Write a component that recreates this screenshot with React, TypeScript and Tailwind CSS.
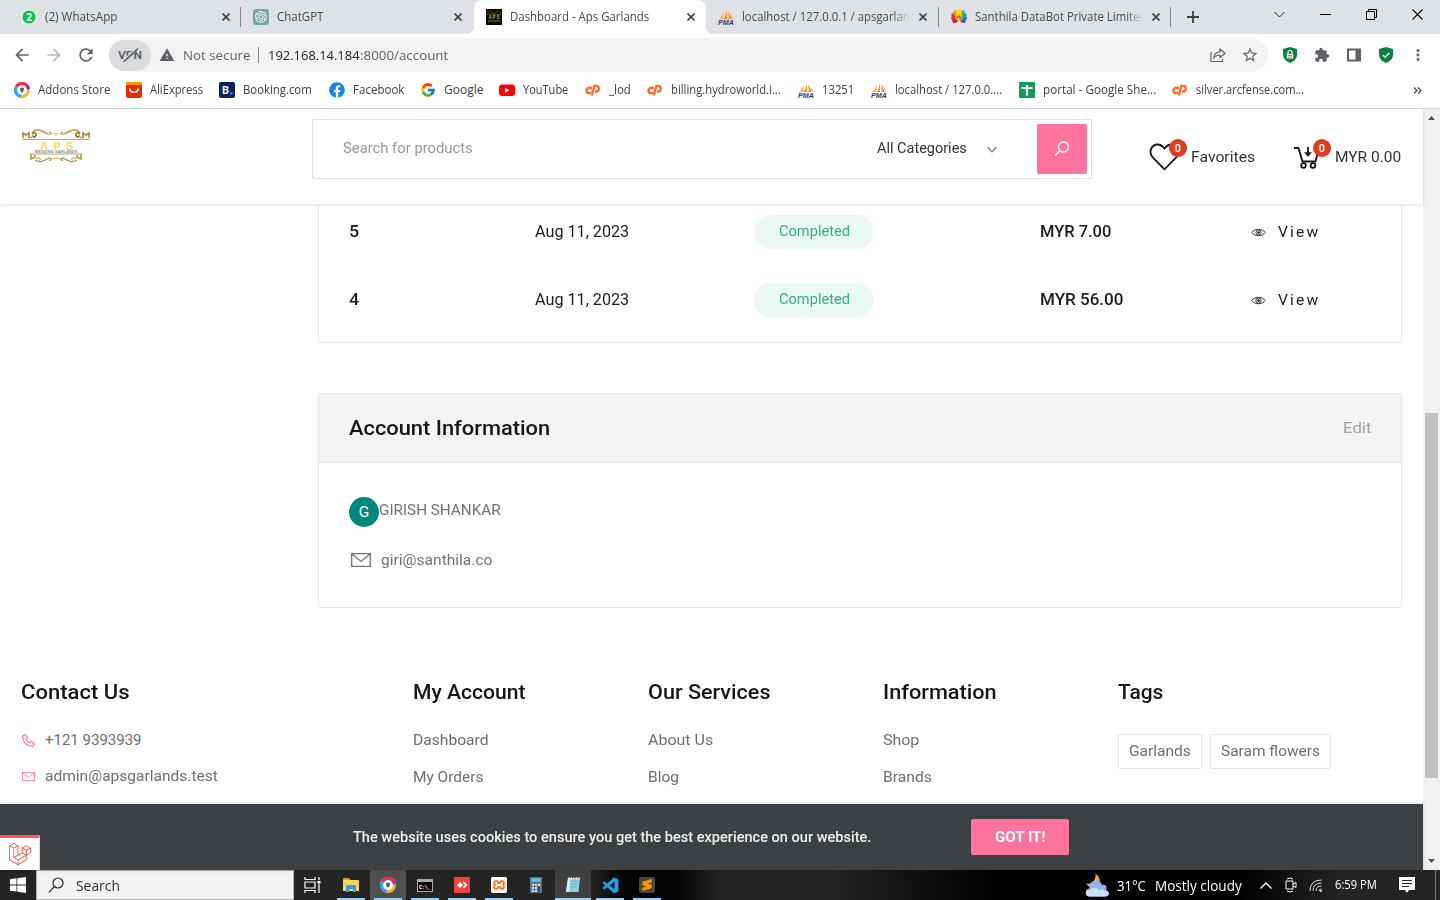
import { useLayoutEffect, useRef, useState } from "react";
import type { ReactNode } from "react";
import { MdArrowBack, MdArrowForward, MdRefresh, MdWarning, MdStarBorder, MdExtension, MdMoreVert } from "react-icons/md";
import { FcGoogle } from "react-icons/fc";
import { FaFacebook, FaLaravel } from "react-icons/fa";
import { SiOpenai, SiXampp, SiSublimetext } from "react-icons/si";
import { BiLogoVisualStudio } from "react-icons/bi";

/** Single line of text whose glyphs are stretched or condensed to fill `w` pixels. */
function Text({ children, w, className = "" }: { children: string; w: number; className?: string }) {
  const ref = useRef<HTMLSpanElement>(null);
  const [scale, setScale] = useState(1);
  useLayoutEffect(() => {
    if (ref.current) {
      setScale(w / ref.current.offsetWidth);
    }
  }, []);
  return (
    <span className={"block shrink-0 whitespace-pre " + className} style={{ width: w }}>
      <span ref={ref} className="block w-max origin-left" style={{ transform: `scaleX(${scale})` }}>
        {children}
      </span>
    </span>
  );
}

function BrowserDisc({ className }: { className: string }) {
  return (
    <svg viewBox="0 0 16 16" className={className}>
      <circle cx="8" cy="8" r="8" fill="#f8b62d" />
      <path d="M8 8 1.1 4A8 8 0 0 1 15.600 5.600Z" fill="#f2284c" />
      <path d="M8 8 1.100 4A8 8 0 0 0 6.500 15.900Z" fill="#2ea6f5" />
      <path d="M8 8 14.500 3.300A8 8 0 0 1 15.900 7Z" fill="#8a2be0" />
      <circle cx="8" cy="8" r="4.900" fill="#fff" />
      <path d="M6 6.200 8 5.400l2 .8c0 2.300-.6 3.600-2 4.600-1.400-1-2-2.300-2-4.600Z" fill="#555d68" />
    </svg>
  );
}

function PmaIcon() {
  return (
    <svg viewBox="0 0 16 16" className="size-4 shrink-0">
      <path d="M5.500 2v8H1C3.200 8 4.700 5.500 5.500 2Z" fill="#f9b25c" />
      <path d="M9 0v10H5.500C7.500 7 8.500 4 9 0Z" fill="#f79226" />
      <path d="M10 2.500c2 2.300 3 4.700 3 7.500h-2.500C11 7.500 10.800 5 10 2.500Z" fill="#f58a1f" />
      <path d="M13 5.500c1.300 1.300 2 3 2.200 4.500h-1.600Z" fill="#f9b25c" />
      <text x="0" y="16" fontSize="6.600" fontWeight="bold" fontStyle="italic" textLength="16" lengthAdjust="spacingAndGlyphs" fontFamily="Liberation Sans, sans-serif" fill="#34386c">PMA</text>
    </svg>
  );
}

function CpanelIcon() {
  return (
    <svg viewBox="0 0 16 16" className="size-4 shrink-0" fill="none" stroke="#ff6c2c" strokeWidth="2.400">
      <path d="M7 5.700H4.200a2.700 2.700 0 0 0 0 5.400H6" />
      <path d="M6.800 13.500 9.300 4h2.500a2.900 2.900 0 0 1 0 5.500H10" />
    </svg>
  );
}

function ApsFavicon() {
  return (
    <svg viewBox="0 0 16 16" className="size-4 shrink-0">
      <rect width="16" height="16" fill="#0b0906" />
      <path d="M1 4q3-3 6 0 1 1 2 0 3-3 6 0M1 5.500h14M2 11.500h12M2 13q3-2 6 0 3-2 6 0" stroke="#695627" fill="none" strokeWidth=".8" />
      <text x="2.500" y="10.300" fontSize="4.500" fontWeight="bold" textLength="11" fontFamily="Liberation Sans, sans-serif" fill="#c8a548">APS</text>
    </svg>
  );
}

function Flower() {
  const petals = [
    { a: -130, c: "#c2185b" }, { a: 130, c: "#7b2fa0" }, { a: -100, c: "#e91e63" }, { a: 100, c: "#2a6be0" },
    { a: -70, c: "#e53935" }, { a: 70, c: "#00a9bd" }, { a: -40, c: "#ff9800" }, { a: 40, c: "#4caf50" }, { a: 0, c: "#ffe000" },
  ];
  return (
    <svg viewBox="0 0 16 16" className="size-4 shrink-0">
      {petals.map((p) => (
        <ellipse key={p.a} cx="8" cy="4" rx="2.600" ry="4" fill={p.c} transform={`rotate(${p.a} 8 8)`} />
      ))}
      <circle cx="8" cy="8.500" r="3.400" fill="#f9c513" />
      <path d="M6 9.500a2 2 0 1 1 3.500.8M8 8.700h1" stroke="#7a3b10" fill="none" />
    </svg>
  );
}

function WhatsAppIcon() {
  return (
    <svg viewBox="0 0 16 16" className="size-4 shrink-0">
      <path d="M8 .5A7.500 7.500 0 1 1 4.500 14.700L.4 15.700 1.300 11.500A7.500 7.500 0 0 1 8 .5Z" fill="#f7f7f7" />
      <circle cx="8" cy="8" r="6.600" fill="#12bf4c" />
      <text x="8" y="11.600" fontSize="10" fontWeight="bold" textAnchor="middle" fontFamily="Open Sans, sans-serif" fill="#fff">2</text>
    </svg>
  );
}

function Cross({ className = "" }: { className?: string }) {
  return (
    <svg viewBox="0 0 8 8" className={"size-2 shrink-0 " + className}>
      <path d="M.5.5l7 7M7.500.5l-7 7" stroke="#3c4043" strokeWidth="1.600" />
    </svg>
  );
}

function Tab({ icon, title, w, active, sep, fade }: { icon: ReactNode; title: string; w: number; active?: boolean; sep?: boolean; fade?: boolean }) {
  return (
    <div className={"relative flex h-[34px] w-[232.4px] shrink-0 items-center pl-[12px] " + (active ? "rounded-t-lg bg-white" : "")}>
      {active && (
        <>
          <span className="absolute bottom-0 -left-2 size-2 bg-[radial-gradient(circle_at_0_0,#dee1e6_8px,white_8.500px)]" />
          <span className="absolute -right-2 bottom-0 size-2 bg-[radial-gradient(circle_at_100%_0,#dee1e6_8px,white_8.500px)]" />
        </>
      )}
      {icon}
      <div className={"ml-2 w-[168px] overflow-hidden " + (fade ? "mask-r-from-90%" : "")}>
        <Text w={w}>{title}</Text>
      </div>
      <Cross className="ml-[9px]" />
      {sep && <span className="ml-auto h-5 w-px bg-[#808387]" />}
    </div>
  );
}

function TabStrip() {
  return (
    <div className="flex h-[34px] shrink-0 bg-[#dee1e6] pl-[9px] text-[12px] leading-[34px] text-[#45494d]">
      <Tab icon={<WhatsAppIcon />} title="(2) WhatsApp" w={72} sep />
      <Tab
        icon={<span className="grid size-4 shrink-0 place-items-center rounded-[3px] bg-[#74aa9c]"><SiOpenai className="size-3 text-white" /></span>}
        title="ChatGPT"
        w={46}
      />
      <Tab icon={<ApsFavicon />} title="Dashboard - Aps Garlands" w={139} active />
      <Tab icon={<PmaIcon />} title="localhost / 127.0.0.1 / apsgarlands" w={180} sep fade />
      <Tab icon={<Flower />} title="Santhila DataBot Private Limited" w={172} sep fade />
      <div className="flex flex-1 items-center">
        <svg viewBox="0 0 12 12" className="ml-4 size-3"><path d="M6 0v12M0 6h12" stroke="#3c4043" strokeWidth="1.800" /></svg>
        <div className="mr-[17px] mb-1.5 ml-auto flex gap-[35px]">
          <svg viewBox="0 0 11 11" className="size-[11px]"><path d="M.5 3l5 5 5-5" stroke="#222" fill="none" /></svg>
          <svg viewBox="0 0 11 11" className="size-[11px]"><path d="M0 5.500h11" stroke="#000" /></svg>
          <svg viewBox="0 0 11 11" className="size-[11px]"><path d="M.5 2.500h8v8h-8zM2.500 2.500v-2h8v8h-2" stroke="#000" fill="none" /></svg>
          <svg viewBox="0 0 11 11" className="size-[11px]"><path d="M.5.5l10 10M10.500.5l-10 10" stroke="#000" strokeWidth="1.100" /></svg>
        </div>
      </div>
    </div>
  );
}

function Toolbar() {
  return (
    <div className="flex h-[38px] shrink-0 items-center bg-white pt-1 text-[#5f6368]">
      <MdArrowBack className="ml-3 size-5" />
      <MdArrowForward className="ml-3 size-5 text-[#b9bbbe]" />
      <MdRefresh className="ml-3 size-5" />
      <div className="ml-[13px] flex h-[34px] w-[1159px] items-center rounded-full bg-[#f1f3f4] text-[14px]">
        <div className="grid h-[31px] w-[42px] place-items-center rounded-full bg-[#dadce0]">
          <svg viewBox="0 0 24 14" className="h-3.5 w-6">
            <text x="0" y="11" fontSize="11.500" fontWeight="bold" textLength="24" lengthAdjust="spacingAndGlyphs" fontFamily="Roboto, sans-serif" fill="#5f6368">VPN</text>
            <path d="M4 13.500 19 0" stroke="#dadce0" strokeWidth="1.500" />
            <path d="M5.500 14 20 .5" stroke="#5f6368" strokeWidth="1.600" />
          </svg>
        </div>
        <MdWarning className="ml-2 size-4" />
        <Text w={67} className="ml-2 text-[13.500px]">Not secure</Text>
        <span className="mx-[8px] h-4 w-px bg-[#85888c]" />
        <Text w={92} className="ml-px text-[13.500px] text-[#202124]">192.168.14.184</Text>
        <Text w={88} className="text-[13.500px]">:8000/account</Text>
        <svg viewBox="0 0 16 16" className="ml-auto size-4" fill="none" stroke="#5f6368" strokeWidth="1.200">
          <path d="M1 5v9.500h11.500V12" />
          <path d="M10 2l5 4.500-5 4V8C7 8 5 9 3.500 11.500 4 7.500 6.500 5 10 4.600Z" />
        </svg>
        <MdStarBorder className="mr-[9px] ml-[15px] size-[18px]" />
      </div>
      <svg viewBox="0 0 16 16" className="ml-[14px] size-4">
        <path d="M8 0l7 2v5.500c0 4-3 7-7 8.500-4-1.500-7-4.500-7-8.500V2Z" fill="#0b8043" />
        <rect x="4.800" y="7" width="6.400" height="4.600" rx=".6" fill="#fff" />
        <path d="M6 7V5.500a2 2 0 0 1 4 0V7" stroke="#fff" fill="none" strokeWidth="1.200" />
        <path d="M6 8.500h4M6 10.100h4" stroke="#0b8043" strokeWidth=".7" />
      </svg>
      <MdExtension className="ml-4 size-4" />
      <svg viewBox="0 0 16 16" className="ml-4 size-4"><path d="M2 2.500h12v11H2z" fill="#fff" stroke="#5f6368" strokeWidth="2" /><path d="M9.500 2H15v12H9.500z" fill="#5f6368" /></svg>
      <svg viewBox="0 0 16 16" className="ml-4 size-4">
        <path d="M8 0l7 2v5.500c0 4-3 7-7 8.500-4-1.500-7-4.500-7-8.500V2Z" fill="#0b8043" />
        <path d="M4.800 8l2.300 2.200L11.400 6" stroke="#fff" fill="none" strokeWidth="1.400" />
      </svg>
      <MdMoreVert className="ml-[15px] size-[18px]" />
    </div>
  );
}

function Bookmark({ icon, title, w, cell }: { icon: ReactNode; title: string; w: number; cell: string }) {
  return (
    <div className={"flex shrink-0 items-center gap-2 " + cell}>
      {icon}
      <Text w={w}>{title}</Text>
    </div>
  );
}

function BookmarksBar() {
  return (
    <div className="flex h-[37px] shrink-0 items-center border-b border-[#d5d6d8] bg-white pl-[14px] text-[12px] text-[#3c4043]">
      <Bookmark cell="w-[112px]" icon={<BrowserDisc className="size-4 shrink-0" />} title="Addons Store" w={72} />
      <Bookmark
        cell="w-[93px]"
        icon={<svg viewBox="0 0 16 16" className="size-4 shrink-0"><rect width="16" height="16" rx="2" fill="#e62e04" /><path d="M0 3V2Q0 0 2 0h12q2 0 2 2v1Z" fill="#ff9a00" /><path d="M3.500 6.500c1 5 8 5 9 0" stroke="#fff" fill="none" strokeWidth="1.500" /></svg>}
        title="AliExpress"
        w={53}
      />
      <Bookmark
        cell="w-[110px]"
        icon={<svg viewBox="0 0 16 16" className="size-4 shrink-0"><rect width="16" height="16" rx="2" fill="#0c1f62" /><text x="3" y="12" fontSize="11" fontWeight="bold" fontFamily="Roboto, sans-serif" fill="#fff">B</text><circle cx="12.300" cy="11.200" r="1.200" fill="#1ba0e2" /></svg>}
        title="Booking.com"
        w={69}
      />
      <Bookmark cell="w-[91px]" icon={<FaFacebook className="size-4 shrink-0 text-[#1384f2]" />} title="Facebook" w={51} />
      <Bookmark cell="w-[79px]" icon={<FcGoogle className="size-4 shrink-0" />} title="Google" w={39} />
      <Bookmark
        cell="w-[86px]"
        icon={<svg viewBox="0 0 16 16" className="size-4 shrink-0"><rect y="2.500" width="16" height="11.500" rx="3" fill="#f00" /><path d="M6 5.700v5l4.500-2.500Z" fill="#fff" /></svg>}
        title="YouTube"
        w={45}
      />
      <Bookmark cell="w-[62px]" icon={<CpanelIcon />} title="_lod" w={22} />
      <Bookmark cell="w-[151px]" icon={<CpanelIcon />} title="billing.hydroworld.i..." w={110} />
      <Bookmark cell="w-[73px]" icon={<PmaIcon />} title="13251" w={32} />
      <Bookmark cell="w-[148px]" icon={<PmaIcon />} title="localhost / 127.0.0...." w={107} />
      <Bookmark
        cell="w-[153px]"
        icon={<svg viewBox="0 0 16 16" className="size-4 shrink-0"><rect width="16" height="16" rx="1" fill="#109d58" /><path d="M2.500 6h11M8 3v10.500" stroke="#fff" strokeWidth="2.200" /></svg>}
        title="portal - Google She..."
        w={113}
      />
      <Bookmark cell="w-[140px]" icon={<CpanelIcon />} title="silver.arcfense.com..." w={108} />
      <svg viewBox="0 0 9 7" className="mr-[18px] ml-auto h-[7px] w-[9px]"><path d="M1 .5l3 3-3 3M5 .5l3 3-3 3" stroke="#4a4d51" fill="none" strokeWidth="1.300" /></svg>
    </div>
  );
}

function ApsLogo() {
  return (
    <svg viewBox="0 0 70 36" className="mt-[19px] h-9 w-[70px]" fill="none">
      <g stroke="#a08a58" strokeWidth="1.100">
        <path d="M2 10V5l3 2 3-2v5M68 10V5l-3 2-3-2v5" stroke="#b5852c" strokeWidth="1.600" />
        <path d="M8 10c4 0 5-3 3-5C15-1 22 3 27 6c3 1 4-2 1-2M62 10c-4 0-5-3-3-5C55-1 48 3 43 6c-3 1-4-2-1-2" />
        <path d="M12 9c4 0 4-5 0-4M58 9c-4 0-4-5 0-4" stroke="#8f651f" strokeWidth="1.500" />
        <path d="M15 2.500c4-1 7 2 10 3M55 2.500c-4-1-7 2-10 3" stroke="#ddba50" />
        <path d="M31 6q4-2 4 2 0-4 4-2" stroke="#e3cd83" />
        <path d="M10 26v5l4-2v-2M60 26v5l-4-2v-2" stroke="#b5852c" strokeWidth="1.500" />
        <path d="M14 32c5 4 10 0 14-2 3 0 3 3 0 2M56 32c-5 4-10 0-14-2-3 0-3 3 0 2" />
        <path d="M15 31c3-3 6 0 3 2M55 31c-3-3-6 0-3 2" stroke="#d6ac3c" />
        <path d="M32 31q3-2 6 0" stroke="#cfae52" />
      </g>
      <path d="M1 11.500h68M9 26h52" stroke="#aaa295" strokeWidth="1.200" />
      <text x="19" y="21.500" fontSize="11" fontWeight="bold" textLength="33" fontFamily="Liberation Sans, sans-serif" fill="#f0da62">APS</text>
      <text x="14" y="25" fontSize="3.200" fontWeight="bold" textLength="42" fontFamily="Liberation Sans, sans-serif" fill="#7b7364">WEDDING GARLANDS</text>
    </svg>
  );
}

function Badge() {
  return <span className="absolute -top-[5px] left-5 grid size-[18px] place-items-center rounded-full bg-[#e33b1e] pt-px text-[11px] leading-none font-medium text-white">0</span>;
}

function SiteHeader() {
  return (
    <header className="relative z-10 flex h-[95px] shrink-0 bg-white pl-[21px] text-[#333] shadow-[0_1px_4px_rgba(0,0,0,0.12)]">
      <ApsLogo />
      <div className="mt-2.5 ml-[221px] flex h-[60px] w-[780px] items-center rounded-[2px] border border-[#dfdfdf] pl-[30px] text-[14px]">
        <Text w={130} className="pb-px text-[#999]">Search for products</Text>
        <Text w={90} className="ml-[404px] pb-px">All Categories</Text>
        <svg viewBox="0 0 10 7" className="ml-5 h-[7px] w-2.5"><path d="M.5 1 5 5.800 9.500 1" stroke="#777" fill="none" strokeWidth="1.200" /></svg>
        <div className="mr-1 ml-auto grid h-[50px] w-[50px] place-items-center rounded-[2px] bg-[#ff749f]">
          <svg viewBox="0 0 16 16" className="size-4" fill="none" stroke="#fff" strokeWidth="1.400"><circle cx="9.500" cy="6" r="5" /><path d="M6 9.600.8 15" /></svg>
        </div>
      </div>
      <div className="relative mt-[35px] ml-[57px] flex h-[26px] items-center text-[15px]">
        <svg viewBox="0 0 31 28" className="h-7 w-[31px]" fill="none"><path d="M15.500 26.300 3.500 14.200C-.8 9 2.500 1.500 8.500 1.500c3 0 5 1.500 7 4 2-2.500 4-4 7-4 6 0 9.300 7.500 5 12.700Z" stroke="#161616" strokeWidth="1.800" /></svg>
        <Text w={64} className="ml-[11px] pt-px">Favorites</Text>
        <Badge />
      </div>
      <div className="relative mt-[35px] ml-[38px] flex h-[26px] items-center text-[15px]">
        <svg viewBox="0 0 28 24" className="h-6 w-7" fill="none" stroke="#161616" strokeWidth="1.800">
          <path d="M1 3h4.500l4 13.500h13L25 7" /><path d="M15 2v8" /><path d="M11.500 7.500h7L15 11.500Z" fill="#161616" strokeWidth=".5" />
          <circle cx="10.500" cy="20.500" r="2.300" /><circle cx="20" cy="20.500" r="2.300" />
        </svg>
        <Text w={66} className="ml-[14px] pt-px">MYR 0.00</Text>
        <Badge />
      </div>
    </header>
  );
}

function OrderRow({ id, amount, w }: { id: string; amount: string; w: number }) {
  return (
    <div className="grid h-[68px] grid-cols-[186px_219px_286px_211px_1fr] items-center pl-[30px] text-[16px] text-[#1c1c1c]">
      <Text w={10} className="font-medium">{id}</Text>
      <Text w={94}>Aug 11, 2023</Text>
      <div className="grid h-[34px] w-[120px] place-items-center rounded-full bg-[#ebf9f5] pb-px text-[14px] text-[#35ab86]"><Text w={71}>Completed</Text></div>
      <Text w={w} className="font-medium">{amount}</Text>
      <div className="flex items-center gap-3">
        <svg viewBox="0 0 15 9" className="h-[9px] w-[15px]" fill="none" stroke="#333"><path d="M.7 4.500C4 .2 11 .2 14.300 4.500 11 8.800 4 8.800.7 4.500Z" /><circle cx="7.500" cy="4.500" r="2.600" /><circle cx="7.500" cy="4.500" r=".9" fill="#111" /></svg>
        <Text w={42} className="pt-px text-[14.500px] tracking-[2px]">View</Text>
      </div>
    </div>
  );
}

function Envelope({ className }: { className: string }) {
  return <svg viewBox="0 0 20 14" className={className} fill="none" stroke="currentColor" strokeWidth="1.300"><path d="M.7.7h18.600v12.600H.7ZM.7.7 10 8.500 19.300.7" /></svg>;
}

function Orders() {
  return (
    <section className="ml-[318px] h-[139px] w-[1084px] shrink-0 overflow-hidden rounded-b-[2px] border-x border-b border-[#e9e9e9]">
      <div className="-mt-[6px]">
        <OrderRow id="5" amount="MYR 7.00" w={71} />
        <OrderRow id="4" amount="MYR 56.00" w={83} />
      </div>
    </section>
  );
}

function AccountCard() {
  return (
    <section className="mt-[50px] ml-[318px] h-[215px] w-[1084px] shrink-0 rounded-[2px] border border-[#e9e9e9] text-[15px] text-[#727272]">
      <div className="flex h-[69px] items-center justify-between border-b border-[#e6e6e6] bg-[#f2f3f5] px-[30px]">
        <Text w={201} className="text-[20px] font-medium text-[#161616]">Account Information</Text>
        <Text w={28} className="text-[#a3a3a3]">Edit</Text>
      </div>
      <div className="mt-[34px] ml-[30px] flex">
        <span className="grid size-[30px] place-items-center rounded-full bg-[#00897b] pt-0.5 text-[15.500px] text-white">G</span>
        <Text w={122} className="pt-px text-[15px] leading-6">GIRISH SHANKAR</Text>
      </div>
      <div className="mt-[21px] ml-[32px] flex items-center">
        <Envelope className="h-3.5 w-5" />
        <Text w={111} className="ml-2.5 pt-px">giri@santhila.co</Text>
      </div>
    </section>
  );
}

function FooterColumn({ title, w, children }: { title: string; w: number; children: ReactNode }) {
  return (
    <div>
      <Text w={w} className="text-[20px] leading-6 font-medium text-[#161616]">{title}</Text>
      {children}
    </div>
  );
}

function LinkPair({ links }: { links: [string, number][] }) {
  return (
    <div className="mt-6 flex flex-col gap-[13px] leading-6">
      {links.map(([label, w]) => <Text key={label} w={w}>{label}</Text>)}
    </div>
  );
}

function SiteFooter() {
  return (
    <footer className="mt-[72px] grid grid-cols-[392px_235px_235px_235px_1fr] pl-[21px] text-[15px] text-[#6e6e6e]">
      <FooterColumn title="Contact Us" w={108}>
        <div className="mt-6 flex h-6 items-center gap-[9px]">
          <svg viewBox="0 0 15 15" className="size-[15px]" fill="none" stroke="#ff749f" strokeWidth="1.100"><path d="M4 1.500 1.500 3c0 6 5 10.500 10 10.500L13.500 11l-3-2.500-2 1.300C7 9 5.600 7.500 5 6.200l1.500-1.800Z" strokeLinejoin="round" /></svg>
          <Text w={97}>+121 9393939</Text>
        </div>
        <div className="mt-3 flex h-6 items-center gap-[10px] pl-px">
          <Envelope className="h-[9px] w-[13px] text-[#ff749f]" />
          <Text w={173}>admin@apsgarlands.test</Text>
        </div>
      </FooterColumn>
      <FooterColumn title="My Account" w={113}><LinkPair links={[["Dashboard", 76], ["My Orders", 70]]} /></FooterColumn>
      <FooterColumn title="Our Services" w={122}><LinkPair links={[["About Us", 65], ["Blog", 31]]} /></FooterColumn>
      <FooterColumn title="Information" w={114}><LinkPair links={[["Shop", 36], ["Brands", 49]]} /></FooterColumn>
      <FooterColumn title="Tags" w={45}>
        <div className="mt-[30px] flex gap-2">
          <div className="grid h-[35px] w-[84px] place-items-center rounded-[2px] border border-[#e6e6e6]"><Text w={62}>Garlands</Text></div>
          <div className="grid h-[35px] w-[121px] place-items-center rounded-[2px] border border-[#e6e6e6]"><Text w={99}>Saram flowers</Text></div>
        </div>
      </FooterColumn>
    </footer>
  );
}

function CookieBar() {
  return (
    <div className="relative flex h-[66px] shrink-0 items-center bg-[#3c4043] pl-[353px] text-[14.500px] font-medium text-[#f0f0f0] shadow-[0_0_4px_rgba(0,0,0,0.2)]">
      <Text w={518} className="pt-0.5">The website uses cookies to ensure you get the best experience on our website.</Text>
      <div className="ml-[100px] grid h-9 w-[98px] place-items-center rounded-[2px] bg-[#ff749f] pt-0.5 text-white"><Text w={51} className="font-bold">GOT IT!</Text></div>
      <div className="absolute bottom-0 left-0 grid h-[35px] w-10 place-items-center border-t-[3px] border-r border-t-[#ff5661] border-r-[#ddd] bg-white">
        <FaLaravel className="size-[22px] text-[#ff2d20]" />
      </div>
    </div>
  );
}

function Scrollbar() {
  return (
    <div className="flex w-[17px] shrink-0 flex-col items-center bg-[#f1f1f1]">
      <svg viewBox="0 0 7 4" className="mt-[7px] h-1 w-[7px]"><path d="M0 4h7L3.500 0Z" fill="#505050" /></svg>
      <div className="mt-[293px] h-[365px] w-[13px] bg-[#c1c1c1]" />
      <svg viewBox="0 0 7 4" className="mt-auto mb-[7px] h-1 w-[7px]"><path d="M0 0h7L3.500 4Z" fill="#505050" /></svg>
    </div>
  );
}

function TaskApp({ children, open = true, className = "" }: { children: ReactNode; open?: boolean; className?: string }) {
  return (
    <div className={"flex h-[30px] w-9 shrink-0 items-center justify-center " + className}>
      <div className="relative grid h-full w-7 place-items-center">
        {children}
        {open && <span className="absolute bottom-0 h-0.5 w-7 bg-[#9ad1fa]" />}
      </div>
    </div>
  );
}

function Taskbar() {
  return (
    <div className="flex h-[30px] shrink-0 items-center bg-[linear-gradient(90deg,#242424_0_590px,#050505_620px_680px,#242424_720px_830px,#141414_900px,#000_1000px_1240px,#242424_1340px)] text-white">
      <svg viewBox="0 0 16 16" className="mx-[10px] size-4 shrink-0" fill="#fff"><path d="M0 2.200 6.500 1.300v6.200H0ZM7.300 1.200 16 0v7.500H7.300ZM0 8.400h6.500v6.200L0 13.700ZM7.300 8.400H16V16l-8.700-1.200Z" /></svg>
      <div className="flex h-[30px] w-[258px] shrink-0 items-center border border-[#b5b5b5] bg-[#f2f2f2] pl-[11px]">
        <svg viewBox="0 0 16 16" className="size-4" fill="none" stroke="#222" strokeWidth="1.200"><circle cx="10" cy="6" r="5" /><path d="M6.500 9.500.8 15.300" /></svg>
        <Text w={44} className="ml-3 pt-0.5 text-[14.500px] text-[#303030]">Search</Text>
      </div>
      <TaskApp open={false}>
        <svg viewBox="0 0 17 16" className="h-4 w-[17px]" fill="none" stroke="#fff" strokeWidth="1.200"><path d="M1 0v2.500h10V0M1 16v-2.500h10V16M1 5h10v6H1ZM15 0v3M15 7v9" /><path d="M13.500 4h3v2.500h-3z" fill="#fff" stroke="none" /></svg>
      </TaskApp>
      <TaskApp className="ml-[3px]">
        <svg viewBox="0 0 16 14" className="h-3.5 w-4"><path d="M0 1q0-1 1-1h5l1.500 2H0Z" fill="#e5a00d" /><path d="M0 2h15q1 0 1 1v10H0Z" fill="#ffd45c" /><path d="M3 14V8q0-1 1-1h8q1 0 1 1v6h-3v-3H6v3Z" fill="#3b97e3" /></svg>
      </TaskApp>
      <TaskApp className="ml-px bg-[#505050]"><BrowserDisc className="size-4" /></TaskApp>
      <TaskApp className="ml-px">
        <svg viewBox="0 0 16 13" className="h-[13px] w-4"><rect width="16" height="13" fill="#a4aab0" /><path d="M1 3h14v9H1z" fill="#000" /><text x="2" y="10" fontSize="6" fontWeight="bold" textLength="12" fontFamily="Liberation Mono, monospace" fill="#fff">C:\_</text></svg>
      </TaskApp>
      <TaskApp className="ml-px">
        <svg viewBox="0 0 16 16" className="size-4"><rect width="16" height="16" fill="#ef443b" /><path d="M6 5l3 3-3 3-3-3ZM8.500 5.500 10 4.500 13.500 8 10 11.500 8.500 10.500 11 8Z" fill="#fff" /></svg>
      </TaskApp>
      <TaskApp className="ml-px"><span className="grid size-4 place-items-center rounded-sm bg-[#f47b20]"><SiXampp className="size-4 text-white" /></span></TaskApp>
      <TaskApp open={false} className="ml-px">
        <svg viewBox="0 0 12 16" className="h-4 w-3"><rect width="12" height="16" fill="#687785" /><rect x="1.500" y="1.500" width="9" height="3" fill="#50d6f5" /><path d="M2 7h2v2H2zM5 7h2v2H5zM8 7h2v2H8zM2 10h2v2H2zM5 10h2v2H5zM2 13h2v2H2zM5 13h2v2H5z" fill="#d9dde0" /><path d="M8 10h2v5H8z" fill="#1656a0" /></svg>
      </TaskApp>
      <TaskApp className="ml-px bg-[#404040] shadow-[inset_0_-2px_0_#9ad1fa]">
        <svg viewBox="0 0 16 16" className="size-4"><path d="M3 1h12l-1.500 14H1Z" fill="#8ed3e4" /><path d="M3 1h3L4 15H1Z" fill="#d8f1f7" /><path d="M5 4h8M4.700 7h8M4.300 10h8" stroke="#5999ab" strokeWidth=".7" /><path d="M4 0v3M6.500 0v3M9 0v3M11.500 0v3M14 0v3" stroke="#dfe5e7" /></svg>
      </TaskApp>
      <TaskApp className="ml-px"><BiLogoVisualStudio className="size-[19px] text-[#219ded]" /></TaskApp>
      <TaskApp className="ml-px"><span className="grid size-4 place-items-center rounded-[2px] bg-[#484848]"><SiSublimetext className="size-3 text-[#ff9800]" /></span></TaskApp>
      <div className="ml-auto flex items-center">
        <svg viewBox="0 0 25 23" className="h-[23px] w-[25px]"><path d="M10.500 0c4.500 2 5.500 8 2.500 12.500H3.500L1 9.500c6 1 10-3 9.500-9.500Z" fill="#f5a836" /><path d="M5 22.500a4 4 0 0 1-.5-8A6.500 6.500 0 0 1 17 11c5-1 5 3.500 4 5 4 1 4 6.500-1 6.500Z" fill="#8fb2f3" /><path d="M5 22.500c-5.500 0-5.500-6 0-6.500 3-4 8-2 9 .5 3-2 5-1 6 .5 5 0 5 5.500 0 5.500Z" fill="#cfe0fc" /></svg>
        <Text w={29} className="ml-[7px] text-[14px]">31°C</Text>
        <Text w={87} className="ml-[9px] text-[14px]">Mostly cloudy</Text>
        <svg viewBox="0 0 12 7" className="ml-[18px] h-[7px] w-3"><path d="M.5 6.500 6 1l5.500 5.500" stroke="#fff" fill="none" strokeWidth="1.300" /></svg>
        <svg viewBox="0 0 12 16" className="ml-[13px] h-4 w-3" fill="none" stroke="#fff"><path d="M1 4h7v8H1ZM8 7l3-1.500v5L8 9M2 2q3-2 6 0M2 14q3 2 6 0" /></svg>
        <svg viewBox="0 0 13 13" className="ml-3 size-[13px]" fill="none" stroke="#ddd"><path d="M1 12Q1 1 12.500 1M4 12q0-8 8.500-8M7 12q0-5 5.500-5M10 12q0-2 2.500-2" /><circle cx="12" cy="12" r=".7" fill="#fff" /></svg>
        <Text w={42} className="ml-[13px] text-[12px]">6:59 PM</Text>
        <svg viewBox="0 0 16 16" className="ml-[22px] size-4"><path d="M0 0h16v13h-6l-2 3-2-3H0Z" fill="#fff" /><path d="M3 3.500h10M3 6.500h10M3 9.500h7" stroke="#222" /></svg>
        <span className="mr-1 ml-5 h-[30px] w-px bg-[#777]" />
      </div>
    </div>
  );
}

export default function App() {
  return (
    <div className="flex h-[900px] w-[1440px] flex-col overflow-hidden bg-white font-['Open_Sans',sans-serif]">
      <TabStrip />
      <Toolbar />
      <BookmarksBar />
      <div className="flex min-h-0 flex-1">
        <div className="flex w-[1423px] flex-col font-['Roboto',sans-serif]">
          <SiteHeader />
          <main className="min-h-0 flex-1 overflow-hidden">
            <Orders />
            <AccountCard />
            <SiteFooter />
          </main>
          <CookieBar />
        </div>
        <Scrollbar />
      </div>
      <Taskbar />
    </div>
  );
}
